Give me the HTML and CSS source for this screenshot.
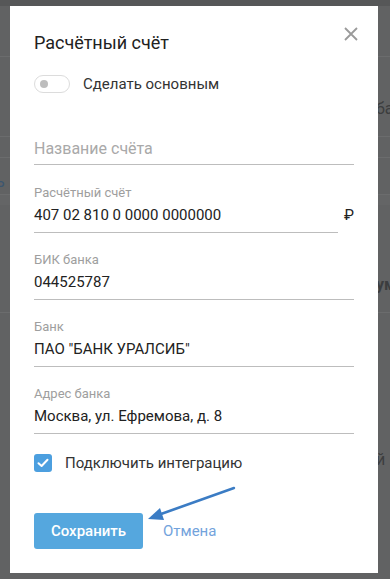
FILE: index.html
```html
<!DOCTYPE html>
<html lang="ru">
  <head>
    <meta charset="UTF-8" />
    <meta name="viewport" content="width=device-width, initial-scale=1.0" />
    <title>Расчётный счёт</title>
    <link rel="stylesheet" href="styles.css">
  </head>
  <body>
    <!-- Dimmed page behind the dialog -->
    <div class="page">
      <div class="page-top"></div>
      <div class="page-row row-1"></div>
      <div class="page-row row-2"><span class="frag frag-right">ба</span></div>
      <div class="page-row row-3"></div>
      <div class="page-row row-4"><span class="frag frag-left">ь</span></div>
      <div class="page-band"></div>
      <div class="page-row row-5"><span class="frag frag-right bold">ум</span></div>
      <div class="page-row row-6"><span class="frag frag-right">й</span></div>
    </div>

    <!-- Dialog -->
    <div class="modal">
      <button class="close" aria-label="Закрыть">
        <svg width="14" height="14" viewBox="0 0 14 14">
          <path d="M1 1 L13 13 M13 1 L1 13" stroke="#9a9a9a" stroke-width="1.8" fill="none" />
        </svg>
      </button>

      <h1 class="title">Расчётный счёт</h1>

      <div class="toggle-row">
        <span class="toggle"><span class="knob"></span></span>
        <span class="toggle-text">Сделать основным</span>
      </div>

      <div class="field field-plain">
        <div class="value placeholder">Название счёта</div>
      </div>

      <div class="field field-row">
        <div class="field-main">
          <div class="label">Расчётный счёт</div>
          <div class="value">407 02 810 0 0000 0000000</div>
        </div>
        <span class="suffix">₽</span>
      </div>

      <div class="field">
        <div class="label">БИК банка</div>
        <div class="value">044525787</div>
      </div>

      <div class="field">
        <div class="label">Банк</div>
        <div class="value">ПАО "БАНК УРАЛСИБ"</div>
      </div>

      <div class="field">
        <div class="label">Адрес банка</div>
        <div class="value">Москва, ул. Ефремова, д. 8</div>
      </div>

      <div class="check-row">
        <span class="checkbox">
          <svg width="12" height="10" viewBox="0 0 12 10">
            <path d="M1.5 5.2 L4.6 8 L10.5 1.8" stroke="#fff" stroke-width="2" fill="none" stroke-linecap="round" stroke-linejoin="round" />
          </svg>
        </span>
        <span class="check-text">Подключить интеграцию</span>
      </div>

      <div class="actions">
        <button class="save">Сохранить</button>
        <a class="cancel" href="#">Отмена</a>
      </div>
    </div>

    <!-- Hint arrow pointing at the save button -->
    <svg class="arrow" width="100" height="50" viewBox="0 0 100 50">
      <line x1="21" y1="34" x2="94" y2="8" stroke="#3b7cc4" stroke-width="2.4" stroke-linecap="round" />
      <polygon points="8,39 20,28 24,40" fill="#3b7cc4" />
    </svg>
  </body>
</html>
```

FILE: styles.css
```css
* {
  box-sizing: border-box;
  margin: 0;
  padding: 0;
}

body {
  background-color: #616263;
  font-family: Roboto, "Noto Sans", Arial, sans-serif;
  height: 100vh;
  overflow: hidden;
}

/* Background page (already dimmed) */
.page {
  display: flex;
  flex-direction: column;
}

.page-top {
  height: 6px;
  background-color: #565758;
}

.page-row {
  position: relative;
  border-bottom: 1px solid #6b6c6d;
}

.row-1 { height: 51px; }
.row-2 { height: 80px; }
.row-3 { height: 21px; }
.row-4 { height: 37px; }
.row-5 { height: 108px; }
.row-6 { height: 240px; border-bottom: none; }

.page-band {
  height: 10px;
  background-color: #646566;
}

.frag {
  position: absolute;
  font-size: 16px;
  color: #3c3d3e;
}

.frag-right {
  left: 376px;
  top: 42px;
}

.row-5 .frag-right {
  top: 70px;
}

.row-6 .frag-right {
  top: 137px;
}

.frag-left {
  left: -4px;
  top: 14px;
  color: #3c5670;
}

.bold {
  font-weight: 700;
}

/* Dialog */
.modal {
  position: fixed;
  top: 6px;
  left: 10px;
  width: 368px;
  height: 567px;
  background-color: #fff;
  padding: 25px 24px 0 24px;
  display: flex;
  flex-direction: column;
}

.close {
  position: absolute;
  top: 21px;
  right: 20px;
  width: 14px;
  height: 14px;
  border: none;
  background: none;
  cursor: pointer;
  display: flex;
}

.title {
  font-size: 18px;
  line-height: 24px;
  font-weight: 400;
  color: #212121;
}

.toggle-row {
  display: flex;
  align-items: center;
  margin-top: 20px;
  height: 18px;
}

.toggle {
  width: 36px;
  height: 18px;
  border: 1px solid #dcdcdc;
  border-radius: 9px;
  display: flex;
  align-items: center;
  padding-left: 5px;
}

.knob {
  width: 8px;
  height: 8px;
  border-radius: 50%;
  background-color: #bdbdbd;
}

.toggle-text {
  margin-left: 13px;
  font-size: 15px;
  color: #333;
}

/* Fields */
.field {
  margin-top: 19px;
}

.label {
  font-size: 13px;
  line-height: 16px;
  color: #9e9e9e;
}

.value {
  margin-top: 4px;
  font-size: 15px;
  line-height: 20px;
  color: #222;
  padding-bottom: 7px;
  border-bottom: 1px solid #bdbdbd;
}

.field-plain {
  margin-top: 46px;
}

.field-plain .value {
  margin-top: 0;
  padding-bottom: 5px;
}

.placeholder {
  font-size: 16px;
  color: #a9a9a9;
}

.field-row {
  display: flex;
  align-items: flex-end;
  margin-top: 20px;
}

.field-main {
  flex: 1;
}

.suffix {
  width: 16px;
  text-align: right;
  font-size: 15px;
  line-height: 20px;
  padding-bottom: 8px;
  color: #222;
}

/* Checkbox */
.check-row {
  display: flex;
  align-items: center;
  margin-top: 20px;
}

.checkbox {
  width: 18px;
  height: 18px;
  border-radius: 3px;
  background-color: #4c9fdf;
  display: flex;
  align-items: center;
  justify-content: center;
}

.check-text {
  margin-left: 13px;
  font-size: 15px;
  color: #333;
}

/* Buttons */
.actions {
  display: flex;
  align-items: center;
  margin-top: 41px;
}

.save {
  width: 109px;
  height: 36px;
  border: none;
  border-radius: 3px;
  background-color: #55a7de;
  color: #fff;
  font-family: Roboto, "Noto Sans", Arial, sans-serif;
  font-size: 15px;
  font-weight: 500;
  cursor: pointer;
}

.cancel {
  margin-left: 20px;
  font-size: 15px;
  color: #73a3dc;
  text-decoration: none;
}

.arrow {
  position: fixed;
  left: 140px;
  top: 480px;
}
```
